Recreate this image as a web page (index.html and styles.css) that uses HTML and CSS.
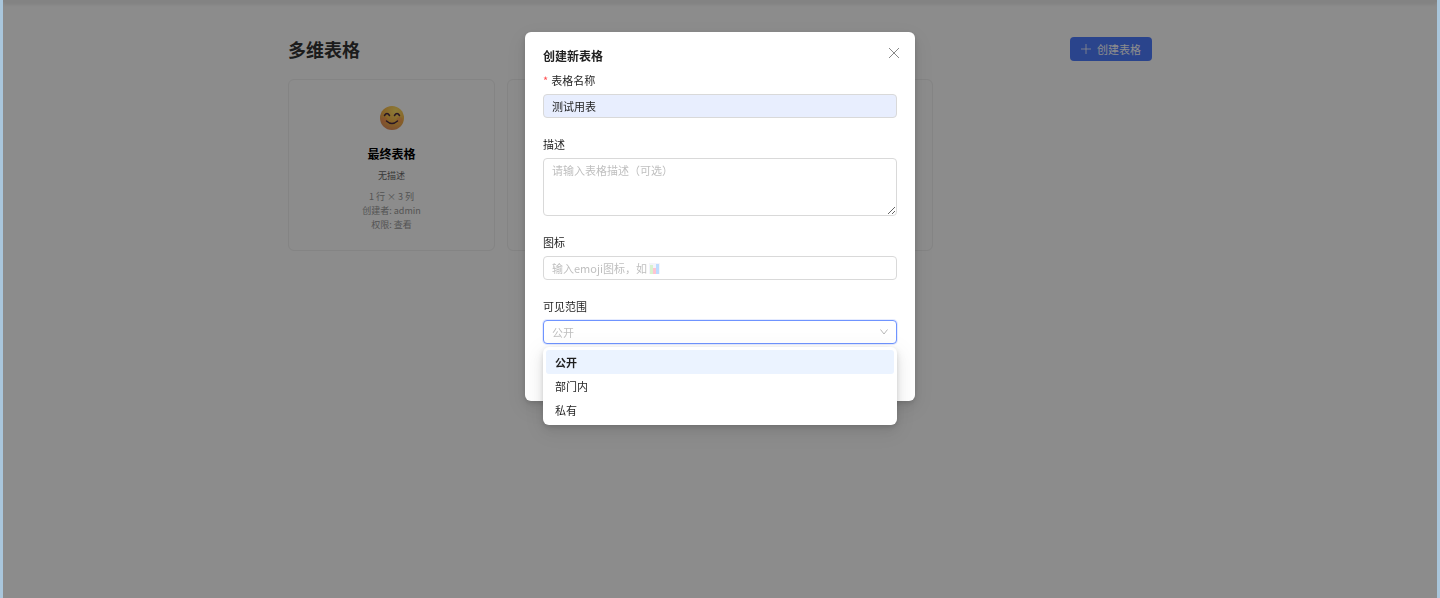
FILE: index.html
```
<!DOCTYPE html>
<html lang="zh-CN">
  <head>
    <meta charset="utf-8">
    <title>多维表格</title>
    <link rel="stylesheet" href="styles.css">
  </head>
  <body>
    <div class="topbar"></div>
    <main class="page">
      <header class="page-header">
        <h1>多维表格</h1>
        <button class="create-btn" type="button">
          <svg width="10" height="10" viewBox="0 0 10 10" fill="none" stroke="currentColor" stroke-width="0.8"><path d="M5 0v10M0 5h10"/></svg>
          创建表格
        </button>
      </header>
      <div class="cards">
        <article class="card">
          <svg class="card-icon" width="26" height="26" viewBox="0 0 26 26">
            <defs>
              <radialGradient id="face" cx="0.65" cy="0.2" r="0.85">
                <stop offset="0" stop-color="#ffe066"/>
                <stop offset="0.6" stop-color="#f5b547"/>
                <stop offset="1" stop-color="#e08a5a"/>
              </radialGradient>
            </defs>
            <circle cx="13" cy="13" r="12" fill="url(#face)"/>
            <circle cx="5.5" cy="15" r="3" fill="#ff7d5c" opacity=".35"/>
            <circle cx="20.5" cy="15" r="3" fill="#ff7d5c" opacity=".35"/>
            <path d="M5.500 10.500q2.500-4 5 0M15.500 10.500q2.500-4 5 0M7.500 16q5.500 5 11 0" fill="none" stroke="#4a2b42" stroke-width="1.5" stroke-linecap="round"/>
          </svg>
          <h2>最终表格</h2>
          <p class="card-desc">无描述</p>
          <p class="card-meta">1 行 × 3 列</p>
          <p class="card-meta">创建者: admin</p>
          <p class="card-meta">权限: 查看</p>
        </article>
        <article class="card"></article>
        <article class="card"></article>
      </div>
    </main>

    <div class="mask">
      <section class="modal" role="dialog" aria-labelledby="modalTitle">
        <button class="modal-close" type="button" aria-label="关闭">
          <svg width="10" height="10" viewBox="0 0 10 10" fill="none" stroke="currentColor"><path d="M0 0l10 10M10 0L0 10"/></svg>
        </button>
        <h2 id="modalTitle">创建新表格</h2>
        <form class="form">
          <div class="field">
            <label class="required" for="name">表格名称</label>
            <input class="control filled" id="name" type="text" value="测试用表">
          </div>
          <div class="field">
            <label for="desc">描述</label>
            <textarea class="control" id="desc" placeholder="请输入表格描述（可选）"></textarea>
          </div>
          <div class="field">
            <label for="icon">图标</label>
            <div class="icon-input">
              <input class="control" id="icon" type="text" placeholder="输入emoji图标，如">
              <svg class="chart" width="11" height="11" viewBox="0 0 11 11">
                <path fill="#f4f4fa" d="M0 0h11v11H0z"/>
                <path fill="#d9f2cf" d="M1 2h3v9H1z"/>
                <path fill="#ffc4d2" d="M4 5h3v6H4z"/>
                <path fill="#bedcff" d="M7 1h3v10H7z"/>
              </svg>
            </div>
          </div>
          <div class="field">
            <label for="scope">可见范围</label>
            <div class="select">
              <select class="control" id="scope">
                <option>公开</option>
                <option>部门内</option>
                <option>私有</option>
              </select>
              <svg class="arrow" width="8" height="6" viewBox="0 0 8 6" fill="none" stroke="currentColor"><path d="M0.500 0.500L4 5l3.500-4.500"/></svg>
              <ul class="dropdown" role="listbox">
                <li class="selected" role="option" aria-selected="true">公开</li>
                <li role="option">部门内</li>
                <li role="option">私有</li>
              </ul>
            </div>
          </div>
        </form>
      </section>
    </div>
  </body>
</html>
```
FILE: styles.css
```
* { box-sizing: border-box; }
body { margin: 0; min-height: 100vh; border: solid #a9c6dc; border-width: 0 3px; font-family: "Noto Sans CJK SC", "Noto Sans", sans-serif; font-size: 11px; color: #1f1f1f; background: #fff; }
h1, h2, p, ul { margin: 0; padding: 0; }
button, input, textarea, select { font: inherit; color: inherit; }

.topbar { height: 2px; background: #eee; box-shadow: 0 1px 4px rgba(0, 0, 0, 0.2); }

.page { max-width: 864px; margin: 0 auto; padding-top: 35px; }
.page-header { display: flex; align-items: center; justify-content: space-between; height: 24px; margin-bottom: 18px; }
.page-header h1 { font-size: 18px; line-height: 24px; color: #333; }
.create-btn { display: flex; align-items: center; gap: 6px; height: 24px; padding: 0 11px; border: none; border-radius: 4px; background: #4e7cff; color: #fff; }

.cards { display: grid; grid-template-columns: repeat(4, 1fr); gap: 12px; }
.card { padding: 25px 18px 18px; border: 1px solid #f0f0f0; border-radius: 6px; text-align: center; }
.card-icon { display: block; margin: 0 auto 14px; }
.card h2 { font-size: 12px; line-height: 18px; color: #000; }
.card-desc { margin: 6px 0 7px; font-size: 9px; line-height: 14px; color: #666; }
.card-meta { font-size: 9px; line-height: 14px; color: #999; }

.mask { position: fixed; inset: 0 3px; display: flex; align-items: flex-start; justify-content: center; padding-top: 32px; background: rgba(0, 0, 0, 0.45); }
.modal { position: relative; width: 390px; padding: 15px 18px 57px; border-radius: 6px; background: #fff; box-shadow: 0 5px 12px rgba(0, 0, 0, 0.08), 0 2px 5px rgba(0, 0, 0, 0.12), 0 7px 21px 6px rgba(0, 0, 0, 0.05); }
.modal h2 { margin-bottom: 7px; font-size: 12px; line-height: 18px; }
.modal-close { position: absolute; top: 13px; right: 13px; display: flex; align-items: center; justify-content: center; width: 16px; height: 16px; padding: 0; border: none; background: none; color: #888; }

.form { display: grid; gap: 18px; }
.field { display: grid; gap: 6px; }
.field label { line-height: 16px; }
.required::before { content: "*"; margin-right: 3px; color: #ff4d4f; }
.control { display: block; width: 100%; height: 24px; padding: 0 8px; border: 1px solid #d9d9d9; border-radius: 4px; background: #fff; outline: none; }
.control::placeholder { color: #bfbfbf; }
.filled { background: #e8eefe; }
textarea.control { height: 58px; padding: 3px 8px; line-height: 16px; resize: vertical; }

.icon-input { position: relative; }
.chart { position: absolute; top: 7px; left: 106px; }

.select { position: relative; }
.select .control { appearance: none; border-color: #6f94ff; box-shadow: 0 0 0 1px rgba(78, 124, 255, 0.15); color: #bfbfbf; }
.arrow { position: absolute; top: 9px; right: 9px; color: #b8b8b8; }
.dropdown { position: absolute; top: 27px; left: 0; right: 0; padding: 3px; border-radius: 6px; background: #fff; list-style: none; box-shadow: 0 5px 12px rgba(0, 0, 0, 0.08), 0 2px 5px rgba(0, 0, 0, 0.12), 0 7px 21px 6px rgba(0, 0, 0, 0.05); }
.dropdown li { padding: 0 9px; border-radius: 3px; line-height: 24px; }
.dropdown .selected { background: #ebf3ff; font-weight: 600; }
```
